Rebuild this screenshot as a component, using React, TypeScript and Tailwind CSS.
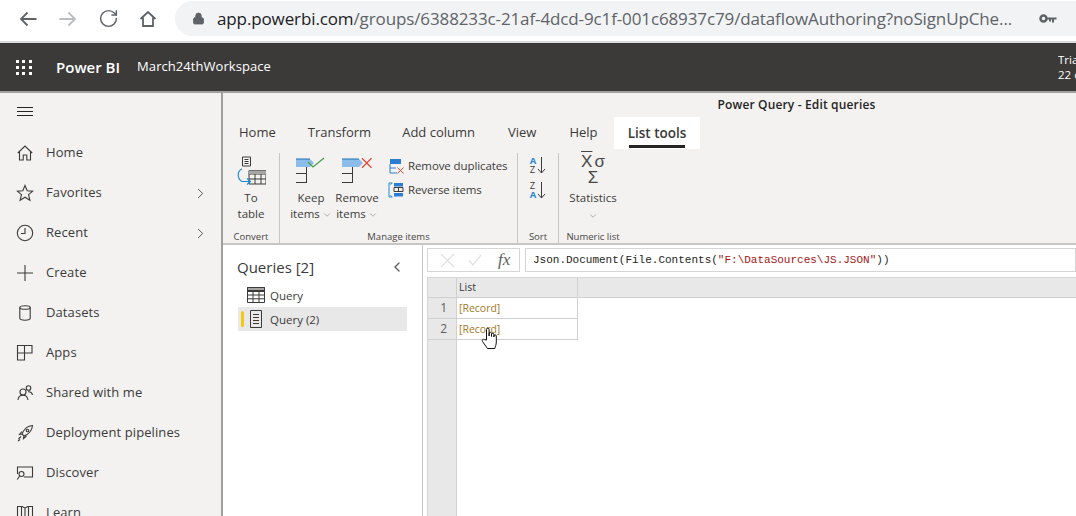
import { RotateCw, Lock, ChevronRight, ChevronDown, ChevronLeft } from "lucide-react";

const SEGOE = "font-['Open_Sans','Noto_Sans',sans-serif]";

const NAV = [
  { label: "Home", icon: "home" },
  { label: "Favorites", icon: "star", more: true },
  { label: "Recent", icon: "clock", more: true },
  { label: "Create", icon: "plus" },
  { label: "Datasets", icon: "db" },
  { label: "Apps", icon: "apps" },
  { label: "Shared with me", icon: "shared" },
  { label: "Deployment pipelines", icon: "rocket" },
  { label: "Discover", icon: "discover" },
  { label: "Learn", icon: "learn" },
];

function NavIcon({ name }: { name: string }) {
  const p = { fill: "none", stroke: "#3b3a39", strokeWidth: 1.1 };
  return (
    <svg width="18" height="18" viewBox="0 0 18 18" {...p}>
      {name === "home" && <path d="M1.800 9 9 2l7.200 7M3.500 7.800V16h3.700v-5h3.600v5h3.700V7.800" />}
      {name === "star" && <path d="M9 1.500l2.200 5.200 5.600.4-4.300 3.600 1.400 5.500L9 13.200l-4.900 3 1.400-5.500L1.200 7.100l5.600-.4z" />}
      {name === "clock" && <><circle cx="9" cy="9" r="7.700" /><path d="M9 4v5.500H5" /></>}
      {name === "plus" && <path d="M9 1v16M1 9h16" />}
      {name === "db" && <><ellipse cx="9" cy="3.500" rx="5.200" ry="1.800" /><path d="M3.800 3.500v10.800c0 1.200 2.300 1.900 5.200 1.900s5.200-.7 5.200-1.900V3.500" /></>}
      {name === "apps" && <path d="M1.500 9h7v7h-7zM1.500 9V1.500h7V9M8.500 1.500h7.500V9H8.500" />}
      {name === "shared" && <><circle cx="7" cy="8" r="3" /><path d="M2 16c.2-3 2-4.800 5-4.800s4.600 1.800 5 4.800" /><circle cx="12.500" cy="4" r="2.300" /><path d="M12 7.800c2-.3 4 .8 4.500 3" /></>}
      {name === "rocket" && <><path d="M6 10C8 5 11 2 16.500 1.500 16 7 13 10 8 12zM6 10l-2.500.5L6 7.500M8 12l-.5 2.500 3-2.500" /><circle cx="11.500" cy="6.500" r="1.300" /><path d="M5 12.500l-2.500 2.500M4 15.500 2 17" /></>}
      {name === "discover" && <><path d="M1.500 10V3h15v10H8" /><circle cx="5.500" cy="10" r="2.500" /><path d="M3.600 12 1.200 15.500" /></>}
      {name === "learn" && <path d="M1.500 2.500h4.500L9 4l3-1.500h4.500V16H1.500zM5.500 2.500V16M9 4v12M12.500 2.500V16" />}
    </svg>
  );
}

function Sidebar() {
  return (
    <aside className="flex w-[223px] shrink-0 flex-col border-r-2 border-[#a19f9d] bg-[#f3f2f1]">
      <div className="flex h-[40px] shrink-0 items-center pb-[4px] pl-[17px]">
        <div className="flex w-4 flex-col gap-[3px]">
          <div className="h-px bg-[#252423]" />
          <div className="h-px bg-[#252423]" />
          <div className="h-px bg-[#252423]" />
        </div>
      </div>
      {NAV.map((n) => (
        <div key={n.label} className="flex h-10 shrink-0 items-center pl-4 pr-[12px] text-[13px] text-[#3b3a39]">
          <div className="w-[30px] shrink-0"><NavIcon name={n.icon} /></div>
          <span className="flex-1 tracking-[0.1px]">{n.label}</span>
          {n.more && <ChevronRight size={17} strokeWidth={1.2} />}
        </div>
      ))}
    </aside>
  );
}

function SmallChevron() {
  return <ChevronDown size={10} strokeWidth={1.3} className="ml-[2px] inline text-[#797775]" />;
}

function KeepRemoveIcon({ mode }: { mode: "keep" | "remove" }) {
  const barEnd = mode === "keep" ? 14 : 17;
  return (
    <svg width="30" height="26" viewBox="0 0 30 26">
      <path d={`M0 2h${barEnd}l4 4-4 4H0z`} fill="#8cbcea" />
      <path d={`M0 2h${barEnd}`} stroke="#1f6fb5" strokeWidth="1" />
      <path d="M0 16.500h10.500M0 25.500h11M10.500 10v15.500" stroke="#3b3a39" fill="none" strokeWidth="1" />
      {mode === "keep" ? (
        <path d="M12 5l5 5L28 1" stroke="#43a047" fill="none" strokeWidth="1.200" />
      ) : (
        <path d="M20 1.300l9.500 9.400M29.500 1.300 20 10.700" stroke="#e0453a" fill="none" strokeWidth="1.200" />
      )}
    </svg>
  );
}

function Group({ label, width, border = true, children }: { label: string; width: number; border?: boolean; children: React.ReactNode }) {
  return (
    <div className={`flex h-[90px] shrink-0 flex-col ${border ? "border-r border-[#c8c6c4]" : ""}`} style={{ width }}>
      <div className="flex-1">{children}</div>
      <div className="text-center text-[9.500px] leading-[12px] text-[#484644]">{label}</div>
    </div>
  );
}

function Ribbon() {
  return (
    <div className="flex h-[96px] shrink-0 border-b-2 border-[#c8c6c4] bg-[#f3f2f1] pt-[4px] text-[11.500px] leading-4 text-[#3b3a39]">
      <Group label="Convert" width={57}>
        <div className="flex flex-col items-center pt-[3px]">
          <svg width="30" height="32" viewBox="0 0 30 32" fill="none">
            <path d="M6.500 1h8v9h-8zM8.500 3.500h4M8.500 5.500h4M8.500 7.500h4" stroke="#3b3a39" />
            <path d="M13 14.500h17V28H13zM13 18h17M13 23h17M19 18v10M25 18v10" stroke="#3b3a39" />
            <path d="M13 14.500h17V18H13z" fill="#a6a6a6" />
            <path d="M6 13C1 15 1 23 6 25.500h8M11 22.500l3.500 3-3.500 3" stroke="#1e8ad6" strokeWidth="1.200" />
          </svg>
          <div className="mt-[2px] text-center">To<br />table</div>
        </div>
      </Group>
      <Group label="Manage items" width={238}>
        <div className="flex pt-[2px]">
          <div className="ml-[8px] flex w-[46px] flex-col items-center pt-[2px]">
            <KeepRemoveIcon mode="keep" />
            <div className="mt-[7px] whitespace-nowrap text-center">Keep<br />items<SmallChevron /></div>
          </div>
          <div className="flex w-[46px] flex-col items-center pt-[2px]">
            <KeepRemoveIcon mode="remove" />
            <div className="mt-[7px] whitespace-nowrap text-center">Remove<br />items<SmallChevron /></div>
          </div>
          <div className="ml-[9px] flex flex-col gap-[8px] pt-[3px] whitespace-nowrap tracking-[-0.1px]">
            <div className="flex h-4 items-center gap-[3px]">
              <svg width="16" height="16" viewBox="0 0 16 16" fill="none">
                <path d="M1 1h11v5H1z" fill="#2b7cd3" />
                <path d="M1 6v9h7M1 10h6" stroke="#2b7cd3" />
                <path d="M8.500 9.500l6 6M14.500 9.500l-6 6" stroke="#e0453a" />
              </svg>
              Remove duplicates
            </div>
            <div className="flex h-4 items-center gap-[3px]">
              <svg width="16" height="16" viewBox="0 0 16 16" fill="none" className="-ml-[2px] w-[18px]">
                <path d="M4 1H1v14h3M2.500 2.500l2-1.500M2.500 13.500l2 1.500" stroke="#1e8ad6" />
                <path d="M6 1h9v3.500H6z" fill="#2b7cd3" />
                <path d="M6 5.500h9v4H6zM10.500 5.500v4" stroke="#3b3a39" />
                <path d="M6 11h9v3.500H6z" fill="#2b7cd3" />
              </svg>
              Reverse items
            </div>
          </div>
        </div>
      </Group>
      <Group label="Sort" width={41}>
        <div className="flex flex-col items-center gap-[7px] pt-[3px]">
          {[["A", "Z"], ["Z", "A"]].map(([a, b]) => (
            <div key={a} className="flex items-center gap-[1px]">
              <div className="flex flex-col text-[9.500px] leading-[9px]">
                <span className={a === "A" ? "font-bold text-[#2b88d8]" : "text-[#3b3a39]"}>{a}</span>
                <span className={b === "A" ? "font-bold text-[#2b88d8]" : "text-[#3b3a39]"}>{b}</span>
              </div>
              <svg width="9" height="18" viewBox="0 0 9 18" fill="none" stroke="#3b3a39">
                <path d="M4.500 1v16M1 13l3.500 4L8 13" />
              </svg>
            </div>
          ))}
        </div>
      </Group>
      <Group label="Numeric list" width={68} border={false}>
        <div className="flex flex-col items-center pt-[1px]">
          <div className="font-['Liberation_Sans',sans-serif] text-[17px] leading-[16px] text-[#484644]">
            <span className="overline">X</span><span className="ml-[2px]">σ</span>
          </div>
          <div className="font-['Liberation_Sans',sans-serif] text-[17px] leading-[16px] text-[#484644]">Σ</div>
          <div className="mt-[4px]">Statistics</div>
          <ChevronDown size={10} strokeWidth={1.3} className="mt-[5px] text-[#797775]" />
        </div>
      </Group>
    </div>
  );
}

function QueriesPane() {
  return (
    <div className="w-[200px] shrink-0 border-r border-[#c8c6c4] bg-white pl-[15px] pt-[11px] text-[#3b3a39]">
      <div className="flex h-[22px] w-[169px] items-center justify-between pr-[2px] text-[15px]">
        <span className="-ml-px">Queries [2]</span>
        <ChevronLeft size={16} strokeWidth={2} className="text-[#605e5c]" />
      </div>
      <div className="mt-[5px] flex h-[24px] items-center pl-[9px] text-[11.500px]">
        <svg width="18" height="16" viewBox="0 0 18 16" fill="none" stroke="#3b3a39" className="mr-[5px]">
          <path d="M.5.500h17v15H.5zM.5 4.500h17M.5 8h17M.5 11.800h17M6 4.500v11M12 4.500v11" />
          <path d="M.5.500h17v3H.5z" fill="#a6a6a6" />
        </svg>
        <span className="pt-[2px]">Query</span>
      </div>
      <div className="flex h-[24px] w-[169px] items-center bg-[#e8e8e8] pl-[3px] text-[11.500px]">
        <div className="mr-[6px] h-[16px] w-[3px] rounded-sm bg-[#f2c811]" />
        <svg width="12" height="18" viewBox="0 0 12 18" fill="none" stroke="#3b3a39" className="mr-[8px]">
          <path d="M.5.500h11v17H.5zM3 4.500h6M3 7.500h6M3 10.500h6M3 13.500h6" />
        </svg>
        <span className="pt-[2px]">Query (2)</span>
      </div>
    </div>
  );
}

function Grid() {
  return (
    <div className="relative mt-[5px] flex flex-1 flex-col border-l border-t border-[#d6d6d6] text-[10.500px] text-[#3b3a39]">
      <div className="flex h-[20px] shrink-0 border-b border-[#d0d0d0] bg-[#e8e8e8]">
        <div className="w-[29px] border-r border-[#d0d0d0]" />
        <div className="flex w-[121px] items-center border-r border-[#d0d0d0] pl-[2px]">List</div>
      </div>
      {["1", "2"].map((r) => (
        <div key={r} className="flex h-[21px] shrink-0">
          <div className="w-[29px] border-b border-r border-[#d0d0d0] bg-[#e8e8e8] pr-[9px] text-right text-[12px] leading-[20px] text-[#605e5c]">{r}</div>
          <div className="w-[121px] border-b border-r border-[#d0d0d0] pl-[2px] leading-[20px] text-[#a5791f]">[Record]</div>
        </div>
      ))}
      <div className="w-[29px] flex-1 border-r border-[#d0d0d0] bg-[#e8e8e8]" />
      {/* hand cursor over the second row */}
      <svg width="18" height="23" viewBox="0 0 18 23" className="absolute left-[53px] top-[49px]" fill="white" stroke="#111" strokeWidth="1">
        <path d="M5.500 13V2.500a1.300 1.300 0 0 1 2.600 0V9V6.500a1.200 1.200 0 0 1 2.400 0V9.500V7.500a1.200 1.200 0 0 1 2.400 0v2.500V9a1.200 1.200 0 0 1 2.400 0v6c0 3-1 4-1.500 6.500H6.500L1.500 14.500c-1-1.500.6-3 2-1.800z" />
      </svg>
    </div>
  );
}

export default function App() {
  return (
    <div className={`flex h-[516px] w-[1076px] flex-col overflow-hidden bg-white ${SEGOE}`}>
      {/* browser chrome */}
      <div className="flex h-[43px] shrink-0 items-start border-b-2 border-[#dadce0] bg-white pt-[1px] text-[#5f6368]">
        <div className="flex h-[35px] w-[175px] shrink-0 items-center pl-[19px]">
          <svg width="18" height="16" viewBox="0 0 18 16" fill="none" stroke="#5f6368" strokeWidth="1.800">
            <path d="M17.500 8H2M8.500 1.500 2 8l6.500 6.500" />
          </svg>
          <svg width="18" height="16" viewBox="0 0 18 16" fill="none" stroke="#babcbe" strokeWidth="1.800" className="ml-[22px]">
            <path d="M.5 8H16M9.500 1.500 16 8l-6.500 6.500" />
          </svg>
          <RotateCw size={21} strokeWidth={1.700} className="ml-[21px]" />
          <svg width="18" height="18" viewBox="0 0 18 18" fill="none" stroke="#5f6368" strokeWidth="1.800" className="ml-[20px]">
            <path d="M1.500 9 9 2l7.500 7M4 7.500V16h10V7.500" />
          </svg>
        </div>
        <div className="flex h-[35px] flex-1 items-center rounded-l-full bg-[#f1f3f4] pl-[17px]">
          <Lock size={13} fill="#5f6368" strokeWidth={1.800} className="mr-[12px]" />
          <div className="w-[800px] overflow-hidden whitespace-nowrap text-[17px] tracking-[-0.12px]">
            <span className="text-[#202124]">app.powerbi.com</span>/groups/6388233c-21af-4dcd-9c1f-001c68937c79/dataflowAuthoring?noSignUpChe...
          </div>
          <svg width="18" height="10" viewBox="0 0 18 10" fill="none" className="ml-[22px]">
            <circle cx="4.500" cy="4.500" r="3" stroke="#5f6368" strokeWidth="2.500" />
            <path d="M8 3.500h9.500v2H15v3h-2v-3h-1v2h-2v-2H8z" fill="#5f6368" />
          </svg>
        </div>
      </div>

      {/* power bi header */}
      <div className="flex h-[50px] shrink-0 items-center border-b-2 border-[#a19f9d] bg-[#3b3a39] text-white">
        <div className="ml-[16px] grid w-[16px] grid-cols-3 gap-[3px]">
          {Array.from({ length: 9 }).map((_, i) => <div key={i} className="h-[3px] w-[3px] bg-white" />)}
        </div>
        <span className="ml-[24px] text-[15px] font-semibold">Power BI</span>
        <span className="ml-[17px] flex-1 text-[13px] tracking-[0.06px]">March24thWorkspace</span>
        <div className="w-[18px] overflow-hidden whitespace-nowrap text-[11.500px] leading-[15px]">Trial:<br />22 days</div>
      </div>

      <div className="flex min-h-0 flex-1">
        <Sidebar />
        <main className="flex min-w-0 flex-1 flex-col">
          <div className="flex h-[24px] shrink-0 items-center justify-center bg-[#f3f2f1] pl-[294px] text-[12px] font-semibold tracking-[0.15px] whitespace-nowrap text-[#252423]">
            Power Query - Edit queries
          </div>
          {/* tabs */}
          <div className="flex h-[32px] shrink-0 items-end bg-[#f3f2f1] pl-[16px] text-[13px] text-[#3b3a39]">
            <div className="mr-[32px] flex h-[32px] items-center">Home</div>
            <div className="mr-[31px] flex h-[32px] items-center">Transform</div>
            <div className="mr-[33px] flex h-[32px] items-center">Add column</div>
            <div className="mr-[33px] flex h-[32px] items-center">View</div>
            <div className="flex h-[32px] items-center">Help</div>
            <div className="ml-auto mr-[376px] flex h-[32px] w-[86px] flex-col items-center bg-white pt-[4px] font-semibold">
              <div className="flex flex-1 items-center text-[13.500px]">List tools</div>
              <div className="mb-[1px] h-[3px] w-[56px] bg-[#252423]" />
            </div>
          </div>
          <Ribbon />
          <div className="flex min-h-0 flex-1">
            <QueriesPane />
            <div className="flex min-w-0 flex-1 flex-col pl-[4px] pt-[3px]">
              <div className="flex h-[24px] shrink-0 gap-[5px]">
                <div className="flex w-[93px] items-center border border-[#d6d6d6] pl-[12px]">
                  <svg width="15" height="15" viewBox="0 0 15 15" fill="none" stroke="#e1e1e1" strokeWidth="1.300">
                    <path d="M1 1l13 13M14 1 1 14" />
                  </svg>
                  <svg width="14" height="14" viewBox="0 0 14 14" fill="none" stroke="#e1e1e1" strokeWidth="1.300" className="ml-[13px]">
                    <path d="M1 7.500 5 12 13 2" />
                  </svg>
                  <span className="ml-[16px] font-['Liberation_Serif',serif] text-[17px] text-[#605e5c] italic">fx</span>
                </div>
                <div className="flex flex-1 items-center border border-[#d6d6d6] pl-[7px] font-['Liberation_Mono',monospace] text-[11px] whitespace-nowrap text-[#252423]">
                  Json.Document(File.Contents(<span className="text-[#a31515]">"F:\DataSources\JS.JSON"</span>))
                </div>
              </div>
              <Grid />
            </div>
          </div>
        </main>
      </div>
    </div>
  );
}
